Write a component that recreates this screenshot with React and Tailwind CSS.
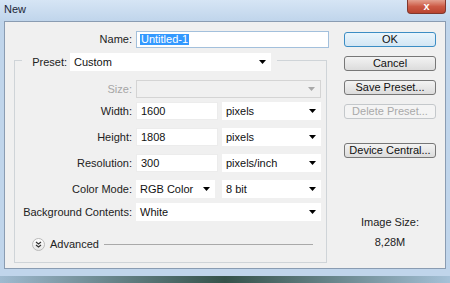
import React from 'react'

const Arrow = ({ disabled }) => (
    <svg width="7" height="4" viewBox="0 0 7 4" className="shrink-0">
        <path d="M0 0 L7 0 L3.5 4 Z" fill={disabled ? '#a8a8a8' : '#000'} />
    </svg>
)

const Select = ({ value, width, disabled }) => (
    <div className={`${width} h-[18px] flex items-center justify-between pl-[4px] pr-[5px] ${disabled ? 'bg-[#f0f0f0] border border-[#d4d4d4]' : 'bg-white'}`}>
        <span className="text-[11px] leading-none text-[#111]">{value}</span>
        <Arrow disabled={disabled} />
    </div>
)

const Field = ({ value, width }) => (
    <div className={`${width} h-[18px] bg-white border border-[#ececec] flex items-center pl-[4px] text-[11px] leading-none text-[#111]`}>{value}</div>
)

const Label = ({ children, gray }) => (
    <div className={`w-[117px] text-right text-[11px] leading-none ${gray ? 'text-[#a6a6a6]' : 'text-[#222]'}`}>{children}</div>
)

const Button = ({ children, primary, disabled, className = '' }) => (
    <div className={`h-[15px] w-[92px] rounded-[3px] border flex items-center justify-center text-[11px] leading-none ${className} ${primary ? 'border-[#3c8dc4] bg-gradient-to-b from-[#eaf5fc] to-[#d3e6f4] text-[#111]' : disabled ? 'border-[#c4c8cb] bg-[#f4f4f4] text-[#a9a9a9]' : 'border-[#777] bg-gradient-to-b from-[#f3f3f3] to-[#dcdcdc] text-[#111]'}`}>
        {children}
    </div>
)

export default function App() {
    return (
        <div className="w-[450px] h-[283px] overflow-hidden flex flex-col bg-[#c0d5eb] font-['Liberation_Sans',Arial,sans-serif]">
            {/* title bar */}
            <div className="h-[21px] flex justify-between bg-gradient-to-b from-[#d6e5f5] to-[#c0d5eb]">
                <span className="ml-[4px] mt-[3px] text-[11px] leading-[12px] text-[#1b2636]">New</span>
                <div className="mr-[4px] w-[39px] h-[14px] rounded-b-[4px] border border-t-0 border-[#80372d] bg-gradient-to-b from-[#e3a08f] via-[#cc5a45] to-[#b9432f] flex items-center justify-center">
                    <span className="text-[11px] font-bold leading-none text-white">x</span>
                </div>
            </div>

            {/* dialog */}
            <div className="h-[248px] px-[4px]">
                <div className="h-full border border-[#8a9cb2] bg-[#f0f0f0] flex">
                    <div className="w-[324px] flex flex-col">
                        <div className="mt-[9px] h-[17px] flex items-center">
                            <div className="w-[127px] text-right text-[11px] leading-none text-[#222]">Name:</div>
                            <div className="ml-[4px] w-[193px] h-[17px] bg-white border border-[#a3c0dc] flex items-center pl-[3px]">
                                <span className="bg-[#3399ff] text-white text-[11px] leading-[11px] px-[1px]">Untitled-1</span>
                            </div>
                        </div>

                        {/* group box */}
                        <div className="ml-[9px] w-[313px] mt-[5px] flex flex-col">
                            <div className="h-[18px] flex">
                                <div className="w-[8px] mt-[7px] border-t border-l border-[#cfd4d8]" />
                                <div className="w-[45px] flex items-center justify-end text-[11px] leading-none text-[#222]">Preset:</div>
                                <div className="ml-[3px]"><Select value="Custom" width="w-[201px]" /></div>
                                <div className="ml-[6px] flex-1 mt-[7px] border-t border-r border-[#cfd4d8]" />
                            </div>
                            <div className="border-l border-r border-b border-[#cfd4d8] pb-[11px] flex flex-col">
                                <div className="mt-[9px] flex items-center">
                                    <Label gray>Size:</Label>
                                    <div className="ml-[4px]"><Select value="" width="w-[185px]" disabled /></div>
                                </div>
                                <div className="mt-[4px] flex items-center">
                                    <Label>Width:</Label>
                                    <div className="ml-[4px]"><Field value="1600" width="w-[82px]" /></div>
                                    <div className="ml-[4px]"><Select value="pixels" width="w-[99px]" /></div>
                                </div>
                                <div className="mt-[8px] flex items-center">
                                    <Label>Height:</Label>
                                    <div className="ml-[4px]"><Field value="1808" width="w-[82px]" /></div>
                                    <div className="ml-[4px]"><Select value="pixels" width="w-[99px]" /></div>
                                </div>
                                <div className="mt-[8px] flex items-center">
                                    <Label>Resolution:</Label>
                                    <div className="ml-[4px]"><Field value="300" width="w-[82px]" /></div>
                                    <div className="ml-[4px]"><Select value="pixels/inch" width="w-[99px]" /></div>
                                </div>
                                <div className="mt-[8px] flex items-center">
                                    <Label>Color Mode:</Label>
                                    <div className="ml-[4px]"><Select value="RGB Color" width="w-[79px]" /></div>
                                    <div className="ml-[7px]"><Select value="8 bit" width="w-[99px]" /></div>
                                </div>
                                <div className="mt-[5px] flex items-center">
                                    <Label>Background Contents:</Label>
                                    <div className="ml-[4px]"><Select value="White" width="w-[185px]" /></div>
                                </div>
                                <div className="mt-[16px] h-[14px] flex items-center">
                                    <div className="ml-[17px] w-[13px] h-[13px] rounded-full border border-[#b9b9b9] bg-gradient-to-b from-white to-[#e6e6e6] flex items-center justify-center">
                                        <svg width="7" height="7" viewBox="0 0 7 7">
                                            <path d="M1 1 L3.5 3 L6 1 M1 4 L3.5 6 L6 4" stroke="#333" strokeWidth="1.2" fill="none" />
                                        </svg>
                                    </div>
                                    <span className="ml-[5px] text-[11px] leading-none text-[#222]">Advanced</span>
                                    <div className="ml-[5px] mr-[13px] flex-1 border-t border-[#a9a9a9]" />
                                </div>
                            </div>
                        </div>
                    </div>

                    {/* buttons */}
                    <div className="ml-[15px] w-[92px] flex flex-col">
                        <Button primary className="mt-[10px]">OK</Button>
                        <Button className="mt-[9px]">Cancel</Button>
                        <Button className="mt-[9px]">Save Preset...</Button>
                        <Button disabled className="mt-[9px]">Delete Preset...</Button>
                        <Button className="mt-[24px]">Device Central...</Button>
                        <div className="mt-[58px] text-center text-[11px] leading-[12px] text-[#222]">Image Size:</div>
                        <div className="mt-[8px] text-center text-[11px] leading-[12px] text-[#222]">8,28M</div>
                    </div>
                </div>
            </div>

            <div className="h-[7px] bg-[#c0d5eb]" />
            <div className="flex-1 bg-gradient-to-r from-[#9fbad0] via-[#35524a] to-[#a5c1d8]" />
        </div>
    )
}
